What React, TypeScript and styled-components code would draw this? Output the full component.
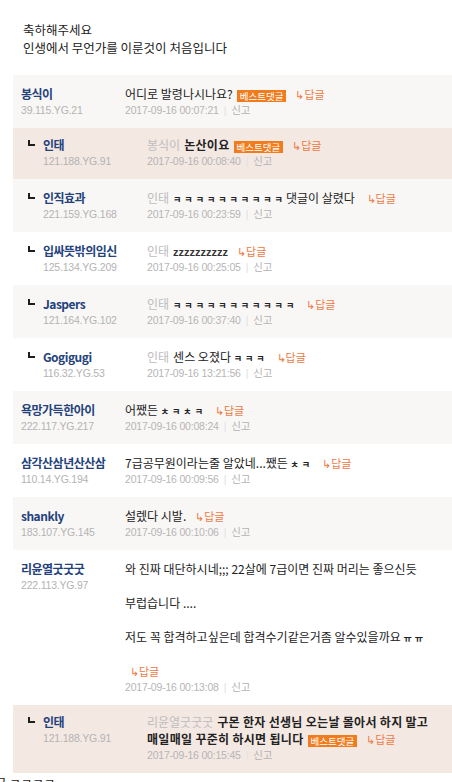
import React from "react";
import styled, { createGlobalStyle, css } from "styled-components";

const Global = createGlobalStyle`
  html, body { margin: 0; padding: 0; background: #fff; }
  body { font-family: "Noto Sans CJK KR", "Noto Sans", sans-serif; overflow: hidden; }
`;

const Page = styled.div`
  width: 452px;
  overflow: hidden;
`;

const Article = styled.div`
  padding: 21px 0 0 23px;
  font-size: 12.5px;
  line-height: 18px;
  color: #222;
  margin-bottom: 18px;
`;

const List = styled.div`
  display: flex;
  flex-direction: column;
  margin-left: 13px;
`;

type Tone = "grey" | "pink" | "white";

const toneBg: Record<Tone, string> = {
  grey: "#f9f7f6",
  pink: "#f4e8e3",
  white: "#ffffff",
};

const Row = styled.div<{ $tone: Tone }>`
  display: flex;
  align-items: flex-start;
  padding: ${(p) => (p.$tone === "pink" ? "8px 0 9px 8px" : "10px 0 9px 8px")};
  background: ${(p) => toneBg[p.$tone]};
`;

const Indent = styled.div`
  flex: none;
  width: 22px;
  padding-top: 4px;
`;

const Elbow = styled.span`
  display: block;
  margin-left: 7px;
  width: 5px;
  height: 4px;
  border-left: 2px solid #1e1e1e;
  border-bottom: 2px solid #1e1e1e;
`;

const Writer = styled.div`
  flex: none;
  width: 104px;
  display: flex;
  flex-direction: column;
`;

const Name = styled.span`
  font-size: 12px;
  font-weight: bold;
  color: #24427b;
  line-height: 17px;
  letter-spacing: -0.5px;
  white-space: nowrap;
`;

const Ip = styled.span`
  font-family: "Liberation Sans", Arial, sans-serif;
  font-size: 10.5px;
  letter-spacing: -0.2px;
  color: #b3b3b3;
  line-height: 17px;
`;

const Content = styled.div`
  flex: 1;
  min-width: 0;
  padding-right: 14px;
  display: flex;
  flex-direction: column;
`;

const Text = styled.div<{ $strong?: boolean }>`
  font-size: 12px;
  line-height: 17px;
  height: auto;
  color: #222;
  min-height: 17px;
  word-break: keep-all;
  ${(p) =>
    p.$strong &&
    css`
      font-weight: bold;
      letter-spacing: 0.3px;
    `}
`;

const ToName = styled.span`
  color: #bdbdbd;
  font-weight: normal;
  letter-spacing: 0;
  line-height: 1;
  margin-right: 4px;
`;

const Jamo = styled.span`
  font-size: 9px;
  font-weight: bold;
  line-height: 1;
  letter-spacing: 3px;
`;

const Zed = styled.span`
  font-family: "Liberation Sans", Arial, sans-serif;
  font-weight: bold;
  font-size: 11px;
  line-height: 1;
  color: #333;
`;

const Badge = styled.span`
  display: inline-block;
  margin-left: 4px;
  padding: 0 3px;
  background: #f07c1e;
  color: #fff;
  font-size: 9.5px;
  font-weight: normal;
  letter-spacing: 0;
  line-height: 12px;
  height: 12px;
  vertical-align: middle;
`;

const Reply = styled.span<{ $own?: boolean }>`
  color: #ec7a44;
  font-size: 11px;
  font-weight: normal;
  letter-spacing: 0;
  line-height: 1;
  margin-left: ${(p) => (p.$own ? "5px" : "9px")};
`;

const Meta = styled.div`
  font-family: "Liberation Sans", Arial, sans-serif;
  font-size: 10.5px;
  letter-spacing: -0.2px;
  color: #b5b5b5;
  line-height: 17px;
  height: 17px;
  white-space: nowrap;
`;

const Sep = styled.span`
  color: #e2e2e2;
  margin: 0 5px;
`;

const Report = styled.span`
  font-family: "Noto Sans CJK KR", sans-serif;
  font-size: 10.5px;
  line-height: 1;
  color: #b3b3b3;
`;

const Tail = styled.div`
  margin-left: -5px;
  padding-top: 1px;
  font-size: 12.5px;
  line-height: 18px;
  color: #222;
`;

type Comment = {
  name: string;
  ip: string;
  date: string;
  tone: Tone;
  reply?: boolean;
  strong?: boolean;
  lines: React.ReactNode[];
};

const ReplyLink = ({ own }: { own?: boolean }) => <Reply $own={own}>↳답글</Reply>;

const comments: Comment[] = [
  {
    name: "봉식이",
    ip: "39.115.YG.21",
    date: "2017-09-16 00:07:21",
    tone: "grey",
    lines: [
      <>
        어디로 발령나시나요?<Badge>베스트댓글</Badge>
        <ReplyLink />
      </>,
    ],
  },
  {
    name: "인태",
    ip: "121.188.YG.91",
    date: "2017-09-16 00:08:40",
    tone: "pink",
    reply: true,
    strong: true,
    lines: [
      <>
        <ToName>봉식이</ToName>논산이요<Badge>베스트댓글</Badge>
        <ReplyLink />
      </>,
    ],
  },
  {
    name: "인직효과",
    ip: "221.159.YG.168",
    date: "2017-09-16 00:23:59",
    tone: "grey",
    reply: true,
    lines: [
      <>
        <ToName>인태</ToName>
        <Jamo>ㅋㅋㅋㅋㅋㅋㅋㅋㅋㅋ</Jamo>댓글이 살렸다 <ReplyLink />
      </>,
    ],
  },
  {
    name: "입싸뜻밖의임신",
    ip: "125.134.YG.209",
    date: "2017-09-16 00:25:05",
    tone: "white",
    reply: true,
    lines: [
      <>
        <ToName>인태</ToName>
        <Zed>zzzzzzzzzz</Zed>
        <ReplyLink />
      </>,
    ],
  },
  {
    name: "Jaspers",
    ip: "121.164.YG.102",
    date: "2017-09-16 00:37:40",
    tone: "grey",
    reply: true,
    lines: [
      <>
        <ToName>인태</ToName>
        <Jamo>ㅋㅋㅋㅋㅋㅋㅋㅋㅋㅋㅋ</Jamo>
        <ReplyLink />
      </>,
    ],
  },
  {
    name: "Gogigugi",
    ip: "116.32.YG.53",
    date: "2017-09-16 13:21:56",
    tone: "white",
    reply: true,
    lines: [
      <>
        <ToName>인태</ToName>센스 오졌다 <Jamo>ㅋㅋㅋ</Jamo>
        <ReplyLink />
      </>,
    ],
  },
  {
    name: "욕망가득한아이",
    ip: "222.117.YG.217",
    date: "2017-09-16 00:08:24",
    tone: "grey",
    lines: [
      <>
        어쨌든 <Jamo>ㅊㅋㅊㅋ</Jamo>
        <ReplyLink />
      </>,
    ],
  },
  {
    name: "삼각산삼년산산삼",
    ip: "110.14.YG.194",
    date: "2017-09-16 00:09:56",
    tone: "white",
    lines: [
      <>
        7급공무원이라는줄 알았네...쨌든 <Jamo>ㅊㅋ</Jamo>
        <ReplyLink />
      </>,
    ],
  },
  {
    name: "shankly",
    ip: "183.107.YG.145",
    date: "2017-09-16 00:10:06",
    tone: "grey",
    lines: [
      <>
        설렜다 시발.
        <ReplyLink />
      </>,
    ],
  },
  {
    name: "리윤열굿굿굿",
    ip: "222.113.YG.97",
    date: "2017-09-16 00:13:08",
    tone: "white",
    lines: [
      <>와 진짜 대단하시네;;; 22살에 7급이면 진짜 머리는 좋으신듯</>,
      null,
      <>부럽습니다 ....</>,
      null,
      <>
        저도 꼭 합격하고싶은데 합격수기같은거좀 알수있을까요 <Jamo>ㅠㅠ</Jamo>
      </>,
      null,
      <ReplyLink own />,
    ],
  },
  {
    name: "인태",
    ip: "121.188.YG.91",
    date: "2017-09-16 00:15:45",
    tone: "pink",
    reply: true,
    strong: true,
    lines: [
      <>
        <ToName>리윤열굿굿굿</ToName>구몬 한자 선생님 오는날 몰아서 하지 말고 매일매일 꾸준히 하시면 됩니다
        <Badge>베스트댓글</Badge>
        <ReplyLink />
      </>,
    ],
  },
];

const CommentRow = ({ c }: { c: Comment }) => (
  <Row $tone={c.tone}>
    {c.reply && (
      <Indent>
        <Elbow />
      </Indent>
    )}
    <Writer>
      <Name>{c.name}</Name>
      <Ip>{c.ip}</Ip>
    </Writer>
    <Content>
      {c.lines.map((l, i) => (
        <Text key={i} $strong={c.strong}>
          {l}
        </Text>
      ))}
      <Meta>
        {c.date}
        <Sep>|</Sep>
        <Report>신고</Report>
      </Meta>
    </Content>
  </Row>
);

export default function App() {
  return (
    <Page>
      <Global />
      <Article>
        축하해주세요
        <br />
        인생에서 무언가를 이룬것이 처음입니다
      </Article>
      <List>
        {comments.map((c, i) => (
          <CommentRow key={i} c={c} />
        ))}
      </List>
      <Tail>글 ㅋㅋㅋㅋ</Tail>
    </Page>
  );
}
